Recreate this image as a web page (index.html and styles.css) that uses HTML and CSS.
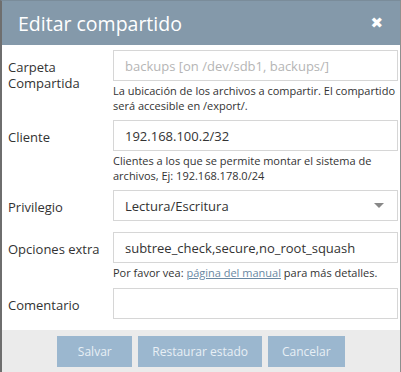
FILE: index.html
```html
<!DOCTYPE html>
<html lang="es">
<head>
    <meta charset="UTF-8">
    <title>Editar compartido</title>
    <link rel="stylesheet" href="styles.css">
</head>
<body>
<div class="dialog">
    <div class="dialog-head">
        <span class="dialog-title">Editar compartido</span>
        <span class="dialog-close">&#10006;</span>
    </div>
    <div class="dialog-body">
        <div class="field">
            <label class="field-label">Carpeta Compartida</label>
            <div class="field-ctrl">
                <input class="text" type="text" placeholder="backups [on /dev/sdb1, backups/]" disabled>
                <p class="help">La ubicación de los archivos a compartir. El compartido será accesible en /export/.</p>
            </div>
        </div>
        <div class="field">
            <label class="field-label">Cliente</label>
            <div class="field-ctrl">
                <input class="text" type="text" value="192.168.100.2/32">
                <p class="help">Clientes a los que se permite montar el sistema de archivos, Ej: 192.168.178.0/24</p>
            </div>
        </div>
        <div class="field field-select">
            <label class="field-label">Privilegio</label>
            <div class="field-ctrl">
                <div class="select">
                    <span>Lectura/Escritura</span>
                    <i class="caret"></i>
                </div>
            </div>
        </div>
        <div class="field field-wide">
            <label class="field-label">Opciones extra</label>
            <div class="field-ctrl">
                <input class="text" type="text" value="subtree_check,secure,no_root_squash">
                <p class="help">Por favor vea: <a href="#">página del manual</a> para más detalles.</p>
            </div>
        </div>
        <div class="field">
            <label class="field-label">Comentario</label>
            <div class="field-ctrl">
                <input class="text" type="text">
            </div>
        </div>
    </div>
    <div class="dialog-foot">
        <button class="btn">Salvar</button>
        <button class="btn">Restaurar estado</button>
        <button class="btn">Cancelar</button>
    </div>
</div>
</body>
</html>
```

FILE: styles.css
```css
* {
    padding: 0;
    margin: 0;
    box-sizing: border-box;
}

body {
    font-family: "Open Sans", "Liberation Sans", sans-serif;
    color: #333;
    background: #fff;
}

.dialog {
    width: 401px;
    height: 372px;
    border-left: 2px solid #6e6e6e;
    border-right: 1px solid #8f8f8f;
    border-top: 1px solid #7a8c9a;
    display: flex;
    flex-direction: column;
}

.dialog-head {
    height: 44px;
    flex: none;
    background: #8499aa;
    color: #fff;
    display: flex;
    align-items: center;
    justify-content: space-between;
    padding: 0 17px 0 16px;
}

.dialog-title {
    font-size: 19.5px;
}

.dialog-close {
    font-size: 15px;
    font-weight: bold;
    font-family: "DejaVu Sans", sans-serif;
}

.dialog-body {
    padding: 5px 2px 0 6px;
    flex: 1;
}

.field {
    display: flex;
    margin-bottom: 7px;
}

.field-select {
    margin-bottom: 11px;
}

.field-wide {
    margin-bottom: 8px;
}

.field-label {
    width: 105px;
    flex: none;
    font-size: 13px;
    line-height: 16px;
    padding-top: 9px;
}

.field-ctrl {
    flex: 1;
}

.text,
.select {
    display: block;
    width: 100%;
    height: 31px;
    border: 1px solid #d6d6d6;
    background: #fff;
    font-family: inherit;
    font-size: 13px;
    color: #333;
    padding: 0 11px;
    outline: none;
}

.text::placeholder {
    color: #b5b5b5;
}

.text:disabled {
    background: #fff;
}

.select {
    display: flex;
    align-items: center;
    justify-content: space-between;
    padding-right: 13px;
}

.caret {
    width: 0;
    height: 0;
    border-left: 5px solid transparent;
    border-right: 5px solid transparent;
    border-top: 5px solid #888;
}

.help {
    font-size: 11px;
    line-height: 15px;
    margin-top: 2px;
    color: #333;
}

.help a {
    color: #6a88a3;
}

.dialog-foot {
    height: 42px;
    flex: none;
    background: #ebebeb;
    display: flex;
    justify-content: center;
    gap: 6px;
    padding-top: 6px;
}

.btn {
    height: 31px;
    min-width: 75px;
    padding: 0 14px;
    border: 0;
    background: #9bb7cf;
    color: #e8eff5;
    font-family: inherit;
    font-size: 12px;
}
```
